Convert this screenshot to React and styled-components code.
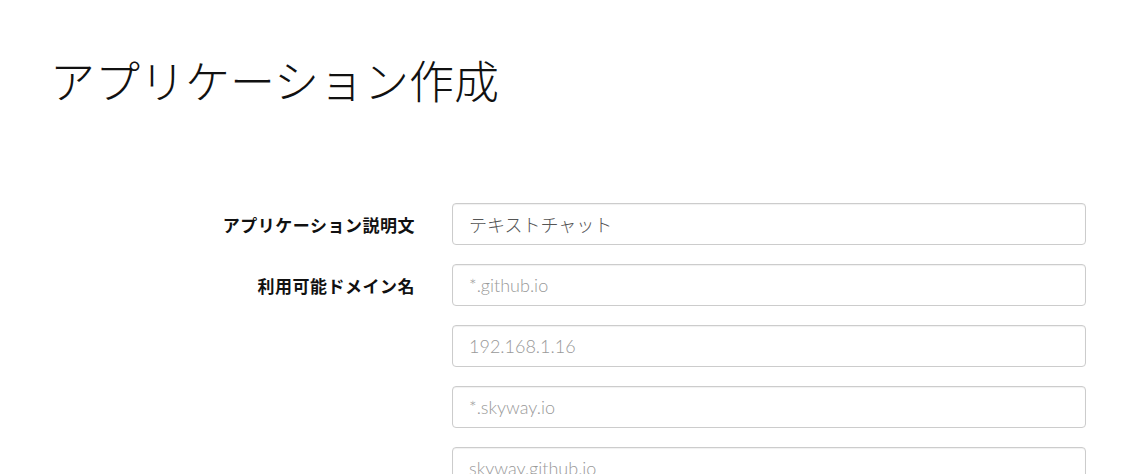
import React from 'react'
import styled, { createGlobalStyle } from 'styled-components'

const GlobalStyle = createGlobalStyle`
    body {
        margin: 0;
        background: #fff;
        font-family: "Lato", "Noto Sans CJK JP", sans-serif;
    }
`

const fields = [
    { label: 'アプリケーション説明文', value: 'テキストチャット' },
    { label: '利用可能ドメイン名', placeholder: '*.github.io' },
    { placeholder: '192.168.1.16' },
    { placeholder: '*.skyway.io' },
    { placeholder: 'skyway.github.io' },
]

function App() {
    return (
        <Page>
            <GlobalStyle />
            <Title>アプリケーション作成</Title>

            <Form>
                {fields.map((f, i) => (
                    <Row key={i}>
                        <Label>{f.label}</Label>
                        <Input
                            defaultValue={f.value}
                            placeholder={f.placeholder}
                        />
                    </Row>
                ))}
            </Form>
        </Page>
    )
}

export default App

const Page = styled.div`
    padding: 0 45px 0 50px;
    height: 474px;
    overflow: hidden;
`

const Title = styled.h1`
    margin: 0;
    padding-top: 50px;
    font-family: "Noto Sans CJK JP", sans-serif;
    font-weight: 300;
    font-size: 45px;
    line-height: 60px;
    color: #111;
`

const Form = styled.div`
    margin-top: 93px;
    display: flex;
    flex-direction: column;
    gap: 19px;
`

const Row = styled.div`
    display: grid;
    grid-template-columns: 365px 634px;
    column-gap: 37px;
    align-items: center;
`

const Label = styled.label`
    text-align: right;
    font-family: "Noto Sans CJK JP", sans-serif;
    font-weight: 700;
    font-size: 17px;
    letter-spacing: 0.5px;
    color: #111;
`

const Input = styled.input`
    box-sizing: border-box;
    height: 42px;
    width: 100%;
    padding: 0 16px;
    border: 1px solid #ccc;
    border-radius: 4px;
    box-shadow: inset 0 1px 1px rgba(0, 0, 0, 0.06);
    font-family: "Lato", "Noto Sans CJK JP", sans-serif;
    font-weight: 300;
    font-size: 18px;
    color: #555;
    outline: none;

    &::placeholder {
        color: #999;
    }
`
